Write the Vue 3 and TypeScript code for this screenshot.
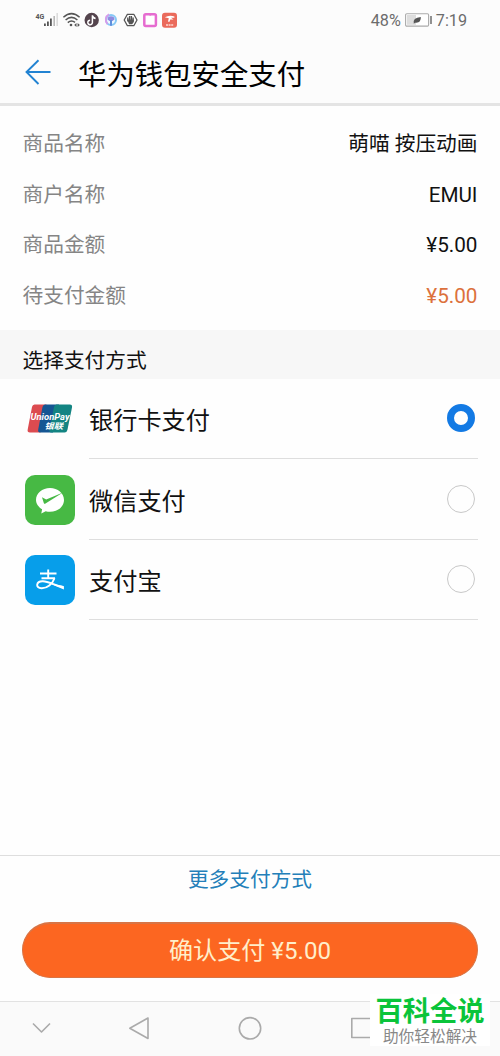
<script setup lang="ts">
import { ref } from 'vue'

interface Detail {
  label: string
  value: string
  accent?: boolean
}

interface Method {
  id: 'union' | 'wechat' | 'alipay'
  name: string
}

const details: Detail[] = [
  { label: '商品名称', value: '萌喵 按压动画' },
  { label: '商户名称', value: 'EMUI' },
  { label: '商品金额', value: '¥5.00' },
  { label: '待支付金额', value: '¥5.00', accent: true },
]

const methods: Method[] = [
  { id: 'union', name: '银行卡支付' },
  { id: 'wechat', name: '微信支付' },
  { id: 'alipay', name: '支付宝' },
]

const selected = ref<Method['id']>('union')
</script>

<template>
  <div class="screen">
    <header class="top">
      <div class="status">
        <svg class="status-icons" width="150" height="24" viewBox="32 8 150 24">
          <text x="35.5" y="18.5" class="net">4G</text>
          <g fill="#555">
            <rect x="44" y="23.5" width="1.8" height="2.5" />
            <rect x="47" y="21.5" width="1.8" height="4.5" />
            <rect x="50" y="18.5" width="1.8" height="7.5" />
          </g>
          <rect x="53.4" y="16" width="1.6" height="10" fill="#b8b8b8" />
          <rect x="56.4" y="13" width="1.6" height="13" fill="#dcdcdc" />
          <g fill="none" stroke="#555" stroke-width="1.5">
            <path d="M63.4 17.2Q71.5 10 79.6 17.2" />
            <path d="M65.6 20Q71.5 14.8 77.4 20" />
            <path d="M67.8 22.6Q71.5 19.4 75 22.4" />
          </g>
          <circle cx="71" cy="25" r="1.3" fill="#555" />
          <path d="M76.5 23l-2.3 2 2.3 2zM77.6 23l2.3 2-2.3 2z" fill="#555" />
          <circle cx="91.7" cy="20" r="7.2" fill="#54444d" />
          <path d="M92.4 15.2v7.2a2.3 2.3 0 1 1-2.3-2.2M92.4 15.5q.5 2.6 3.2 2.9" fill="none" stroke="#fff" stroke-width="1.5" />
          <circle cx="111" cy="20" r="5" fill="#eef8ff" stroke="#86c8f5" stroke-width="2" />
          <path d="M109 14.4A6 6 0 0 0 107.5 24" fill="none" stroke="#d79bea" stroke-width="1.8" />
          <path d="M107.5 19.5q0-3.2 3.5-3.2t3.5 3.2l-2 1.5h-3z" fill="#8f8be0" />
          <path d="M111 20v5.8" stroke="#5f8fdc" stroke-width="2" fill="none" />
          <path d="M127.4 14.3h6.4l3.2 5.7-3.2 5.7h-6.4l-3.2-5.7z" fill="#fff" stroke="#555" stroke-width="1.3" stroke-linejoin="round" />
          <path d="M127.8 17.5v4M129.6 16v5M131.4 16v5M133.1 17.5v4" stroke="#555" stroke-width="1.4" />
          <path d="M127.2 19.5h6.6v2.5l-1.7 2.2h-3z" fill="#555" />
          <rect x="144.3" y="14.3" width="11.6" height="11.6" rx="1.5" fill="#fff" stroke="#e66cd0" stroke-width="2.5" />
          <path d="M148.5 14.5q1.7 2.3 3.4 0" fill="#e66cd0" />
          <rect x="162" y="12.7" width="15" height="15" rx="3" fill="#ea6a5b" />
          <path d="M164.8 17.3q4.7-2.8 9.6-.8v1.3h-3.4l2.5 1.6-3.2.2-1 2.4-1.3-.4.8-3.3z" fill="#fff" />
          <path d="M166 25h7.5" stroke="#ffd9d2" stroke-width="1.4" stroke-dasharray="2 .6" />
        </svg>
        <div class="status-right">
          <span>48%</span>
          <svg width="28" height="14" viewBox="0 0 28 14">
            <rect x=".6" y=".7" width="23" height="12.4" rx="1.2" fill="#fff" stroke="#aaa" stroke-width="1.1" />
            <rect x="2" y="2" width="9" height="9.8" fill="#ddd" />
            <path d="M8.8 10.8Q7.4 4.7 15.8 4.1 16.3 10.5 10 9.7z" fill="#555" />
            <rect x="25.2" y="3" width="1.6" height="8" fill="#777" />
          </svg>
          <span>7:19</span>
        </div>
      </div>
      <div class="titlebar">
        <svg class="back" width="28" height="28" viewBox="0 0 28 28">
          <path d="M26.5 14H2.5M14.5 2.2L2.5 14l12 12" fill="none" stroke="#2283d2" stroke-width="1.9" />
        </svg>
        <h1>华为钱包安全支付</h1>
      </div>
    </header>

    <section class="details">
      <div v-for="d in details" :key="d.label" class="detail">
        <span class="label">{{ d.label }}</span>
        <span class="value" :class="{ accent: d.accent }">{{ d.value }}</span>
      </div>
    </section>

    <h2 class="section-title">选择支付方式</h2>

    <section class="methods">
      <div v-for="m in methods" :key="m.id" class="method" @click="selected = m.id">
        <svg v-if="m.id === 'union'" class="logo" width="50" height="50" viewBox="0 0 50 50">
          <path d="M8.5 10.5h13l-6 28H5q-3 0-2.300-3L7 13q.5-2.500 2.500-2.500z" fill="#dc4b50" />
          <path d="M19.5 10.5H34l-6 28H15q-2.300 0-1.800-3L17.500 13q.6-2.500 2.500-2.500z" fill="#155693" />
          <path d="M31.5 10.5h13.3q2.800 0 2.200 3L42.400 36q-.6 2.500-2.800 2.500H26q-2 0-1.500-3L29 13q.5-2.500 2.500-2.500z" fill="#138482" />
          <text x="5.5" y="25.5" class="up-latin" textLength="39" lengthAdjust="spacingAndGlyphs">UnionPay</text>
          <text x="19.5" y="35" class="up-han" textLength="18.5" lengthAdjust="spacingAndGlyphs">银联</text>
        </svg>
        <svg v-else-if="m.id === 'wechat'" class="logo" width="50" height="50" viewBox="0 0 50 50">
          <rect width="50" height="50" rx="10" fill="#47b944" />
          <path d="M25 13c7.8 0 14 5.2 14 12s-6.2 11.8-14 11.8c-1.5 0-3-.2-4.3-.6l-4.4 2.3.8-4.2C13.5 32 11 28.6 11 25c0-6.800 6.200-12 14-12z" fill="#fff" />
          <path d="M17 22.2l4.2 2.3L38 17.5 20.5 28.5q-1.200.8-1.700-.6z" fill="#47b944" />
        </svg>
        <svg v-else class="logo" width="50" height="50" viewBox="0 0 50 50">
          <rect width="50" height="50" rx="10" fill="#079eea" />
          <g fill="none" stroke="#fff">
            <path d="M15 18.5h16.5M16.5 23.3h13.5M23.2 14.5v8.8" stroke-width="1.9" />
            <path d="M29.5 23.3C27.5 29 22 33.5 16.5 33.3c-6.5-.3-5.5-7.3 1.500-7 6 .3 11 3.700 20.300 5.700" stroke-width="1.9" />
          </g>
          <path d="M26 27.7q5 2.200 12.900 3.500v3.200Q31 31.500 25 28.500z" fill="#fff" />
        </svg>
        <div class="method-body">
          <span>{{ m.name }}</span>
          <i class="radio" :class="{ on: selected === m.id }"></i>
        </div>
      </div>
    </section>

    <footer class="pay">
      <a class="more">更多支付方式</a>
      <button class="confirm">确认支付 ¥5.00</button>
    </footer>

    <nav class="nav">
      <svg width="500" height="54" viewBox="0 1002 500 54">
        <g fill="none" stroke="#aaa" stroke-width="1.6" stroke-linejoin="round">
          <path d="M33 1023.5l8.5 8.5 8.5-8.5" />
          <path d="M148 1018v20.5L129.8 1028.3z" />
          <circle cx="250" cy="1028.3" r="10.7" />
          <rect x="351.8" y="1018.5" width="19" height="19" />
        </g>
      </svg>
    </nav>

    <div class="badge">
      <strong>百科全说</strong>
      <span>助你轻松解决</span>
    </div>
  </div>
</template>

<style>
body {
  margin: 0;
  background: #fff;
}
</style>

<style scoped>
.screen {
  position: relative;
  box-sizing: border-box;
  width: 500px;
  height: 1056px;
  display: flex;
  flex-direction: column;
  overflow: hidden;
  background: #fefefe;
  color: #111;
  font-family: Roboto, "Noto Sans CJK SC", sans-serif;
}
.top {
  box-sizing: border-box;
  height: 106px;
  flex: none;
  background: #fcfcfc;
  border-bottom: 3px solid #e4e4e4;
}
.status {
  height: 40px;
  display: flex;
  align-items: center;
  justify-content: space-between;
  padding: 0 33px 0 32px;
}
.net {
  font: 700 7px Roboto, sans-serif;
  fill: #555;
}
.status-right {
  display: flex;
  align-items: center;
  color: #6c6c6c;
  font-size: 16.2px;
  line-height: 20px;
}
.status-right span {
  margin-top: 1px;
}
.status-right svg {
  margin: 0 3px 0 4px;
}
.titlebar {
  height: 63px;
  display: flex;
  align-items: center;
  padding-left: 24px;
}
.back {
  margin-right: 26px;
}
h1 {
  margin: 8px 0 0;
  font-size: 28.4px;
  line-height: 40px;
  font-weight: 400;
  color: #000;
}
.details {
  flex: none;
  box-sizing: border-box;
  height: 224px;
  padding: 13px 22.5px 0;
}
.detail {
  height: 50.6px;
  display: flex;
  align-items: center;
  justify-content: space-between;
  font-size: 20.7px;
  line-height: 30px;
}
.label {
  color: #858585;
}
.accent {
  color: #dc713c;
}
.section-title {
  flex: none;
  box-sizing: border-box;
  height: 48.7px;
  margin: 0;
  padding: 11px 22.5px 0;
  background: #f7f7f7;
  font-size: 20.7px;
  line-height: 40px;
  font-weight: 400;
}
.methods {
  flex: none;
}
.method {
  height: 80.6px;
  display: flex;
  align-items: center;
  padding: 0 22px 0 25px;
}
.logo {
  flex: none;
  margin-right: 14px;
}
.method-body {
  flex: 1;
  box-sizing: border-box;
  height: 100%;
  display: flex;
  align-items: center;
  justify-content: space-between;
  padding-right: 3px;
  border-bottom: 1px solid #dedede;
  font-size: 24.2px;
}
.radio {
  box-sizing: border-box;
  width: 28px;
  height: 28px;
  margin-bottom: 1px;
  border: 1.5px solid #c8c8c8;
  border-radius: 50%;
}
.radio.on {
  border: 7px solid #137ae4;
}
.up-latin {
  font: italic 700 9px Roboto, sans-serif;
  fill: #fff;
}
.up-han {
  font: italic 700 8px "Noto Sans CJK SC", sans-serif;
  fill: #fff;
}
.pay {
  box-sizing: border-box;
  height: 146px;
  margin-top: auto;
  flex: none;
  display: flex;
  flex-direction: column;
  align-items: center;
  border-top: 1px solid #dedede;
}
.more {
  margin-top: 9px;
  font-size: 20.7px;
  line-height: 30px;
  color: #237fb9;
}
.confirm {
  box-sizing: border-box;
  width: 456px;
  height: 56px;
  margin: 27px 0 0;
  padding: 2px 0 0;
  border: 1px solid #d87445;
  border-top-width: 2px;
  border-radius: 28px;
  background: #fc6621;
  color: #ffeeca;
  font-family: inherit;
  font-size: 24.1px;
  line-height: 51px;
}
.nav {
  box-sizing: border-box;
  flex: none;
  height: 55px;
  border-top: 1.5px solid #e2e2e2;
  background: #fafafa;
}
.nav svg {
  display: block;
}
.badge {
  position: absolute;
  box-sizing: border-box;
  left: 370px;
  top: 994px;
  width: 120px;
  height: 52px;
  padding-top: 1px;
  display: flex;
  flex-direction: column;
  align-items: center;
  background: #fff;
  white-space: nowrap;
}
.badge strong {
  font-size: 27.3px;
  line-height: 34px;
  font-weight: 700;
  color: #0ac43a;
}
.badge span {
  font-size: 15.7px;
  line-height: 16px;
  color: #888;
}
</style>
